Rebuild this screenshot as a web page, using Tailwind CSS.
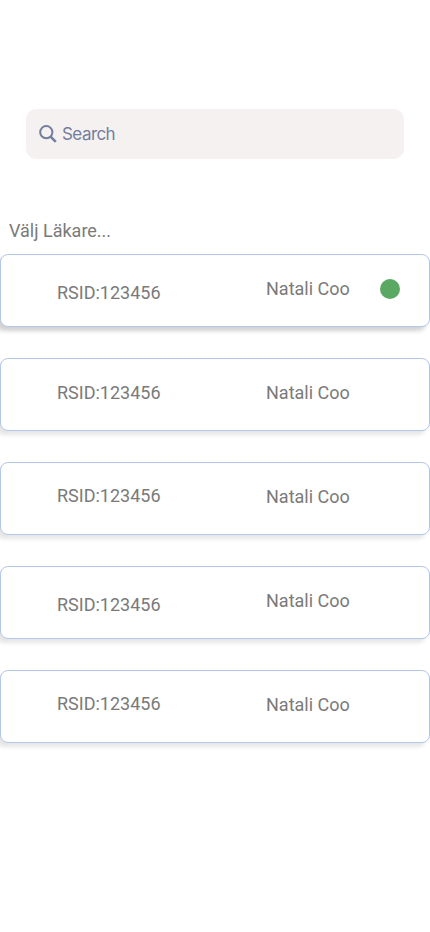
<!DOCTYPE html>
<html lang="sv">
<head>
<meta charset="utf-8">
<title>Välj Läkare</title>
<script src="https://cdn.jsdelivr.net/npm/@tailwindcss/browser@4"></script>
</head>
<body class="bg-white">
<main class="h-[932px] w-[430px] overflow-hidden bg-white pt-[109px] font-['Roboto',sans-serif] text-[18px] leading-[21px] text-[#7a7a7a]">
  <div class="mx-[26px] flex h-[50px] items-center rounded-[10px] bg-[#f5f1f1] pl-[13px] text-[#737d9c]">
    <svg class="size-[18px]" viewBox="0 0 18 18" fill="none" stroke="currentColor" stroke-width="2"><circle cx="7.3" cy="7.2" r="6.1"/><path d="M11.6 11.6 16.8 16.8" stroke-width="2.5"/></svg>
    <span class="ml-[5px] font-['Inter',sans-serif] text-[17px] tracking-[-0.55px]">Search</span>
  </div>
  <h1 class="mt-[61px] pl-[9px]">Välj Läkare...</h1>
  <ul class="mt-[13px] flex flex-col gap-[31px]">
    <li class="flex h-[73px] rounded-[8px] border border-[#b4c7ea] bg-white pl-[56px] shadow-[-4px_4px_4px_rgba(0,0,0,0.18)]"><span class="w-[209px] pt-[27px]">RSID:123456</span><span class="w-[114px] pt-[23px]">Natali Coo</span><span class="mt-[24px] size-5 rounded-full bg-[#5ba862]"></span></li>
    <li class="flex h-[73px] rounded-[8px] border border-[#b4c7ea] bg-white pl-[56px] shadow-[-4px_4px_4px_rgba(0,0,0,0.1)]"><span class="w-[209px] pt-[23px]">RSID:123456</span><span class="pt-[23px]">Natali Coo</span></li>
    <li class="flex h-[73px] rounded-[8px] border border-[#b4c7ea] bg-white pl-[56px] shadow-[-4px_4px_4px_rgba(0,0,0,0.1)]"><span class="w-[209px] pt-[22px]">RSID:123456</span><span class="pt-[23px]">Natali Coo</span></li>
    <li class="flex h-[73px] rounded-[8px] border border-[#b4c7ea] bg-white pl-[56px] shadow-[-4px_4px_4px_rgba(0,0,0,0.1)]"><span class="w-[209px] pt-[27px]">RSID:123456</span><span class="pt-[23px]">Natali Coo</span></li>
    <li class="flex h-[73px] rounded-[8px] border border-[#b4c7ea] bg-white pl-[56px] shadow-[-4px_4px_4px_rgba(0,0,0,0.1)]"><span class="w-[209px] pt-[22px]">RSID:123456</span><span class="pt-[23px]">Natali Coo</span></li>
  </ul>
</main>
</body>
</html>
